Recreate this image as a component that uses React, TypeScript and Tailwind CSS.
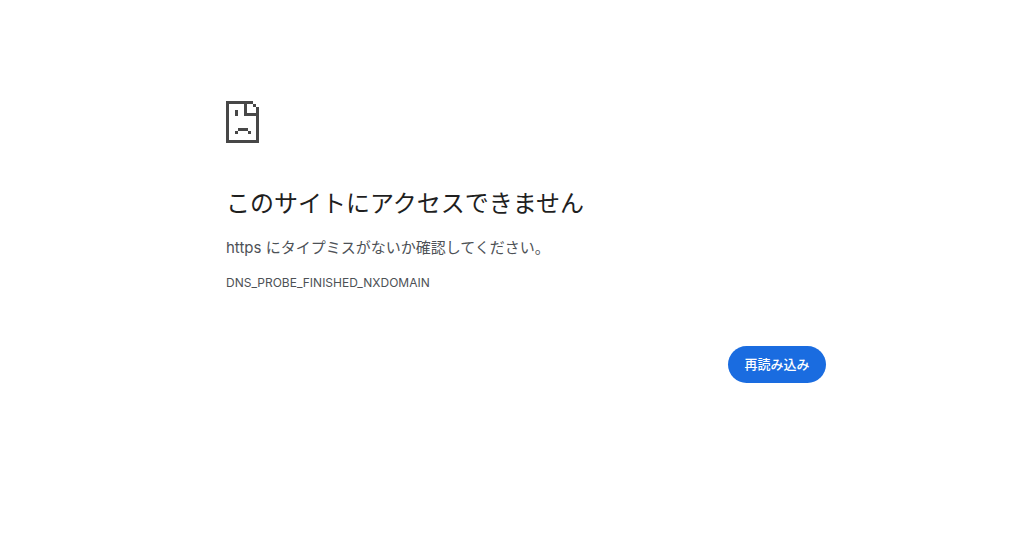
export default function App() {
  return (
    <div className="pl-[39px]">
      <main className="mx-auto w-full max-w-[600px] pt-[101px] font-['Inter','Noto_Sans_CJK_JP',sans-serif] text-[#4d5156]">
        <svg
          className="block h-[42px] w-[33px] text-[#474747]"
          viewBox="0 0 33 42"
          fill="currentColor"
          shapeRendering="crispEdges"
          aria-hidden="true"
        >
          <path d="M0 0h27v3H3v36h27V15H18V3h3v9h9V6h3v36H0z" />
          <path d="M27 3h3v3h-3zM9 9h3v6H9zM12 27h10v3H12zM9 30h3v3H9zM22 30h3v3h-3z" />
        </svg>
        <h1 className="mt-[42px] text-2xl leading-[38px] text-[#1f1f1f]">このサイトにアクセスできません</h1>
        <p className="mt-[13px] text-[15px] leading-6">https にタイプミスがないか確認してください。</p>
        <p className="mt-[13px] text-xs leading-5">DNS_PROBE_FINISHED_NXDOMAIN</p>
        <div className="mt-[53px] flex justify-end">
          <button type="button" className="min-w-[98px] rounded-full bg-[#1a6ce0] px-4 py-2 text-[13px] leading-[21px] font-medium text-white">
            再読み込み
          </button>
        </div>
      </main>
    </div>
  );
}
